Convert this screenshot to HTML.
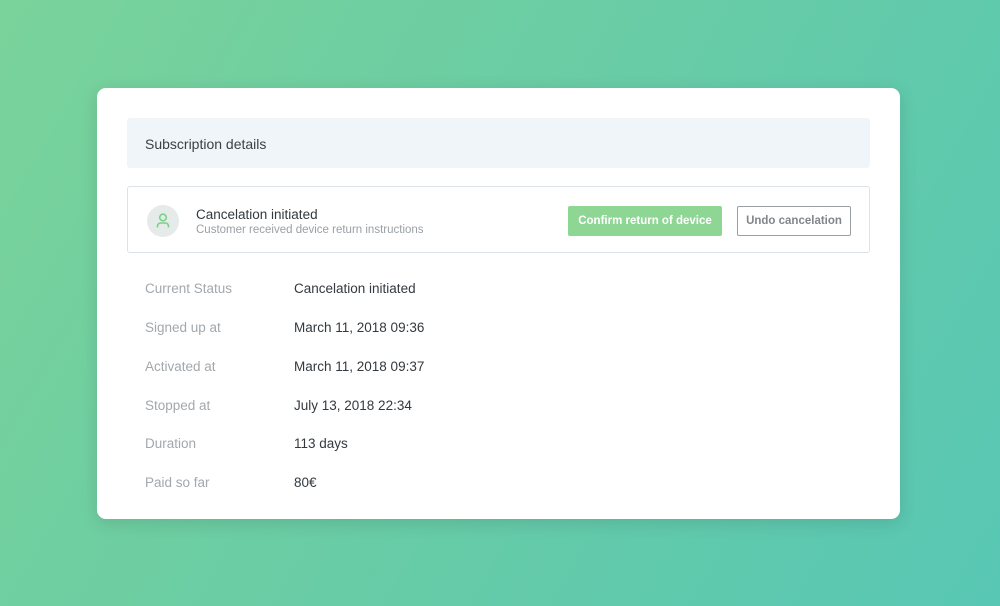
<!DOCTYPE html>
<html><head><style>
*{margin:0;padding:0;box-sizing:border-box}
body{width:1000px;height:606px;overflow:hidden;background:linear-gradient(120deg,#7ad39a 0%,#68cca6 50%,#58c7b4 100%);font-family:"Liberation Sans",sans-serif;position:relative}
.card{position:absolute;left:97px;top:88px;width:803px;height:431px;background:#fff;border-radius:9px;box-shadow:0 4px 18px rgba(0,0,0,.12)}
.hdr{position:absolute;left:30px;top:30px;width:743px;height:50px;background:#eff5f9;border-radius:3px;font-size:14px;color:#3a4046;padding:18px 0 0 18px}
.box{position:absolute;left:30px;top:98px;width:743px;height:67px;border:1px solid #dde2e6;border-radius:3px}
.av{position:absolute;left:19px;top:18px;width:32px;height:32px;border-radius:50%;background:#e5ebe8}
.t1{position:absolute;left:68px;top:20px;font-size:13.5px;color:#33393e}
.t2{position:absolute;left:68px;top:37px;font-size:11.5px;color:#9aa0a5}
.b1{position:absolute;left:440px;top:19px;width:154px;height:30px;background:#8ed694;color:#fff;font-size:11.5px;font-weight:bold;text-align:center;line-height:30px;border-radius:2px}
.b2{position:absolute;left:609px;top:19px;width:114px;height:30px;border:1px solid #9a9fa3;color:#80868a;font-size:11.5px;font-weight:bold;text-align:center;line-height:28px;border-radius:2px}
.row{position:absolute;left:48px;font-size:13.5px}
.row span{position:absolute;white-space:nowrap}
.l{left:0;color:#a2a8ac}.v{left:149px;color:#33393e}
</style></head><body>
<div class="card">
<div class="hdr">Subscription details</div>
<div class="box">
<div class="av"><svg width="32" height="32" viewBox="0 0 32 32"><circle cx="16" cy="12.5" r="3.3" fill="none" stroke="#7bd08a" stroke-width="1.6"/><path d="M10.5 22.5v-1.5a3 3 0 0 1 3-3h5a3 3 0 0 1 3 3v1.5" fill="none" stroke="#7bd08a" stroke-width="1.6"/></svg></div>
<div class="t1">Cancelation initiated</div>
<div class="t2">Customer received device return instructions</div>
<div class="b1">Confirm return of device</div>
<div class="b2">Undo cancelation</div>
</div>
<div class="row" style="top:193px"><span class="l">Current Status</span><span class="v">Cancelation initiated</span></div>
<div class="row" style="top:232px"><span class="l">Signed up at</span><span class="v">March 11, 2018 09:36</span></div>
<div class="row" style="top:271px"><span class="l">Activated at</span><span class="v">March 11, 2018 09:37</span></div>
<div class="row" style="top:310px"><span class="l">Stopped at</span><span class="v">July 13, 2018 22:34</span></div>
<div class="row" style="top:348px"><span class="l">Duration</span><span class="v">113 days</span></div>
<div class="row" style="top:387px"><span class="l">Paid so far</span><span class="v">80€</span></div>
</div>
</body></html>
